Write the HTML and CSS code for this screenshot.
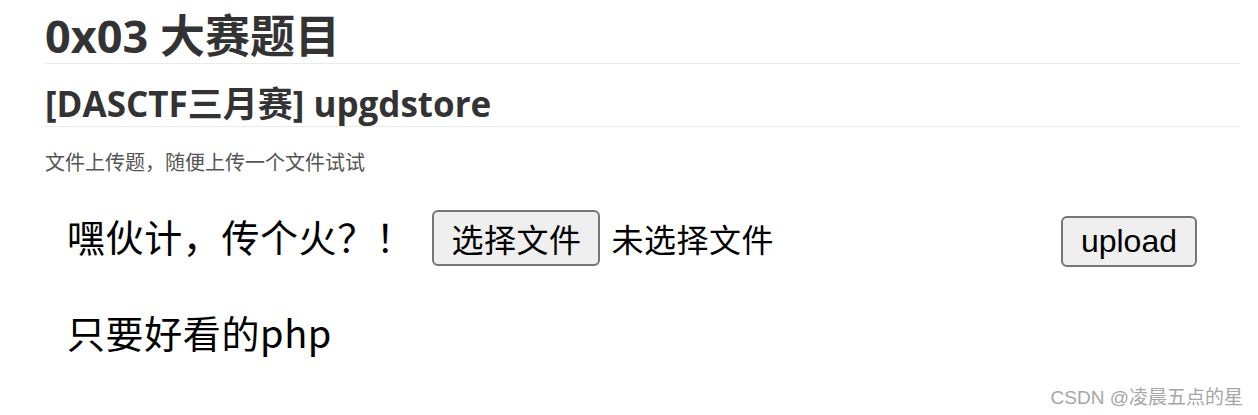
FILE: index.html
```html
<!DOCTYPE html>
<html lang="zh-CN">
<head>
<meta charset="utf-8">
<title>upgdstore</title>
<link rel="stylesheet" href="styles.css">
</head>
<body>
<main class="article">
  <h1 class="h1">0x03 大赛题目</h1>
  <h2 class="h2">[DASCTF三月赛] upgdstore</h2>
  <p class="para">文件上传题，随便上传一个文件试试</p>
  <section class="shot">
    <div class="row">
      <span class="label">嘿伙计，传个火？！</span>
      <span class="file-btn">选择文件</span>
      <span class="file-name">未选择文件</span>
      <span class="upload-btn">upload</span>
    </div>
    <div class="row2">只要好看的php</div>
  </section>
</main>
<div class="watermark">CSDN @凌晨五点的星</div>
</body>
</html>
```
FILE: styles.css
```css
html, body {
  margin: 0;
  padding: 0;
  background: #fff;
}
body {
  width: 1258px;
  height: 415px;
  overflow: hidden;
  position: relative;
}
.article {
  padding: 0 18px 0 45px;
}
.h1 {
  margin: 8px 0 0;
  font-family: "Open Sans", "Noto Sans CJK SC", sans-serif;
  font-weight: 700;
  font-size: 45px;
  line-height: 55px;
  color: #333;
  border-bottom: 1px solid #eaeaea;
}
.h2 {
  margin: 19px 0 0;
  font-family: "Open Sans", "Noto Sans CJK SC", sans-serif;
  font-weight: 700;
  font-size: 35px;
  line-height: 42px;
  padding-bottom: 1px;
  color: #333;
  border-bottom: 1px solid #eaeaea;
}
.para {
  margin: 22px 0 0;
  font-family: "Noto Sans CJK SC", sans-serif;
  font-size: 20px;
  line-height: 26px;
  color: #555;
}
.shot {
  padding: 0 0 0 22px;
  width: 1130px;
  margin-top: 35px;
  color: #000;
}
.row {
  display: flex;
  align-items: baseline;
}
.label {
  font-family: "Noto Sans CJK SC", sans-serif;
  font-size: 38px;
  line-height: 50px;
  letter-spacing: 0.6px;
}
.file-btn {
  margin-left: 18px;
  box-sizing: border-box;
  height: 56px;
  padding: 0 17px;
  border: 2px solid #767676;
  border-radius: 6px;
  background: #efefef;
  font-family: "Noto Sans CJK SC", sans-serif;
  font-size: 32px;
  line-height: 52px;
  letter-spacing: 0.5px;
}
.file-name {
  margin-left: 11px;
  font-family: "Noto Sans CJK SC", sans-serif;
  font-size: 32px;
  line-height: 52px;
  letter-spacing: 0.5px;
}
.upload-btn {
  margin-left: auto;
  box-sizing: border-box;
  height: 51px;
  padding: 0 18px;
  border: 2px solid #767676;
  border-radius: 6px;
  background: #efefef;
  font-family: "Liberation Sans", Arial, sans-serif;
  font-size: 32px;
  line-height: 47px;
}
.row2 {
  margin-top: 40px;
  font-family: "Noto Sans CJK SC", sans-serif;
  font-size: 38px;
  line-height: 50px;
  letter-spacing: 0.6px;
}
.watermark {
  position: absolute;
  right: 15px;
  bottom: 6px;
  font-family: "Liberation Sans", "Noto Sans CJK SC", sans-serif;
  font-size: 19px;
  line-height: 22px;
  color: #a6a6a6;
}
```
